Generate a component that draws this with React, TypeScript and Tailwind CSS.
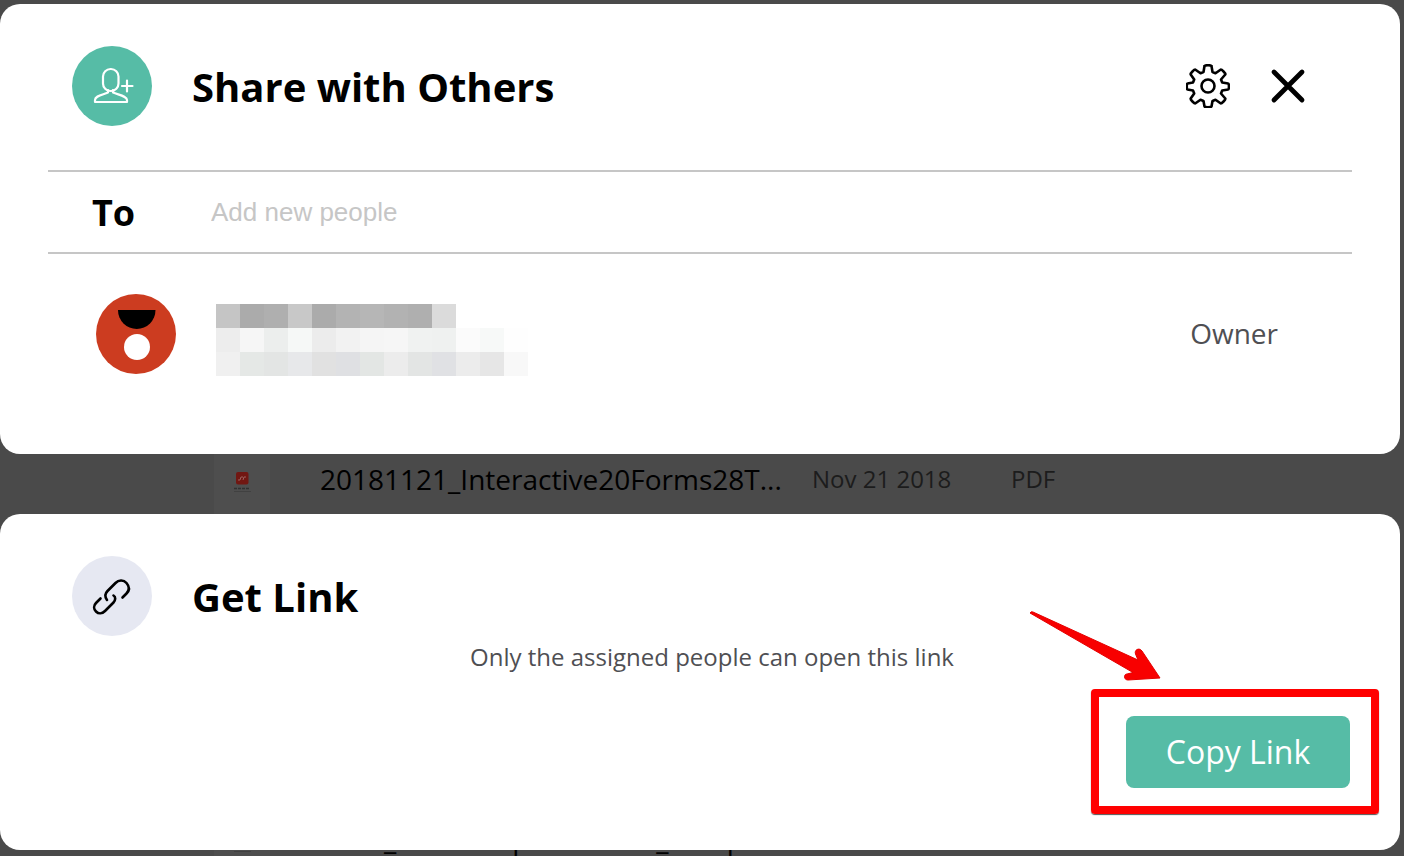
import React from "react";

const MOSAIC = [
  ["bg-[#c5c5c5]", "bg-[#ababab]", "bg-[#afafaf]", "bg-[#c8c8c8]", "bg-[#ababab]", "bg-[#b3b3b3]", "bg-[#b6b6b6]", "bg-[#b2b2b2]", "bg-[#afafaf]", "bg-[#dbdbdb]", "bg-white", "bg-white", "bg-white"],
  ["bg-[#ededed]", "bg-[#f6f6f6]", "bg-[#eceeed]", "bg-[#f6f8f7]", "bg-[#ececec]", "bg-[#f2f2f2]", "bg-[#f5f5f5]", "bg-[#f6f6f6]", "bg-[#f0f2f1]", "bg-[#eff1f0]", "bg-[#fbfbfb]", "bg-[#f7f9f8]", "bg-[#fefefe]"],
  ["bg-[#f0f0f0]", "bg-[#e5e8e6]", "bg-[#e3e5e4]", "bg-[#e7e8ea]", "bg-[#e1e1e1]", "bg-[#dfe0e3]", "bg-[#e3e6e4]", "bg-[#ececec]", "bg-[#e3e5e4]", "bg-[#e0e1e4]", "bg-[#ececec]", "bg-[#e6e6e6]", "bg-[#f8f8f8]"],
];

function FileThumb() {
  return (
    <svg className="h-15 w-14 shrink-0 self-start bg-[#4e4e4e]" viewBox="0 0 56 60" aria-hidden="true">
      <rect x="22" y="18" width="12.500" height="12.500" rx="2" fill="#711712" />
      <path d="M24 26h2l1-3h2M29 26l1-3h2" stroke="#9b625e" fill="none" />
      <path d="M20 34.500h16" stroke="#303030" strokeWidth="1.500" strokeDasharray="3 1" />
      <path d="M20 37.500h17" stroke="#414141" />
    </svg>
  );
}

function FileRow({ name, date, kind }: { name: string; date: string; kind: string }) {
  return (
    <div className="flex h-15 items-center pl-[214px] text-2xl text-[#1c1c1c]">
      <FileThumb />
      <span className="ml-[50px] w-[492px] shrink-0 whitespace-nowrap pb-2.5 text-[28px] leading-9 text-black">{name}</span>
      <span className="w-[199px] shrink-0 pb-2.5 leading-9">{date}</span>
      <span className="pb-2.5 leading-9">{kind}</span>
    </div>
  );
}

export default function App() {
  return (
    <div className="min-h-screen overflow-hidden bg-[#4a4a4a] pt-1 font-['Open_Sans',sans-serif] text-black">
      <section className="mr-1 rounded-[20px] bg-white px-12 pb-[78px]">
        <header className="flex h-[166px] items-center pl-6 pr-[46px] pb-0.5">
          <svg className="size-20 shrink-0" viewBox="0 0 80 80" aria-hidden="true">
            <circle cx="40" cy="40" r="40" fill="#56bca6" />
            <g fill="none" stroke="white" strokeWidth="2.200" strokeLinecap="round" strokeLinejoin="round">
              <rect x="31" y="23" width="15.500" height="22" rx="7.500" />
              <path d="M36 44v2.500C30 49 23 50 23 54v2h32v-2c0-4-8-5-14-7.500V44M55 34.500v11M50 40h10.500" />
            </g>
          </svg>
          <h1 className="ml-10 flex-1 pt-0.5 text-[40px] font-bold leading-12">Share with Others</h1>
          <button aria-label="Settings" className="size-11">
            <svg viewBox="0 0 44 44" fill="none" stroke="black" strokeWidth="2.600" strokeLinejoin="round">
              <path d="M18.500 2c0-1 7-1 7 0l1 6 3 1.200 5-3.500c1-.7 5.500 3.800 4.800 4.800L35 15.500l1.200 3 6 1c1 0 1 6 0 6l-6 1-1.200 3 4.300 5c.7 1-3.800 5.500-4.800 4.800l-5-3.500-3 1.200-1 5.500c0 1-7 1-7 0l-1-5.500-3-1.200-5 3.500c-1 .7-5.500-3.800-4.800-4.800l3.500-5-1.200-3-5.500-1c-1 0-1-6 0-6l5.500-1 1.200-3-3.500-5c-.7-1 3.800-5.500 4.800-4.800l5 3.500 3-1.200z" />
              <circle cx="22" cy="22" r="6.500" />
            </svg>
          </button>
          <button aria-label="Close" className="ml-10 size-9">
            <svg viewBox="0 0 36 36" stroke="black" strokeWidth="4.800" strokeLinecap="round">
              <path d="M4 4l28 28M32 4L4 32" />
            </svg>
          </button>
        </header>
        <div className="flex h-[84px] items-center border-y-2 border-[#c6c6c6] pl-11">
          <label htmlFor="people" className="w-[119px] pt-0.5 text-4xl font-bold">To</label>
          <input id="people" type="text" placeholder="Add new people" className="min-w-0 flex-1 font-['Liberation_Sans',sans-serif] text-[26px] leading-8 outline-none placeholder:text-[#c6c6c6] placeholder:opacity-100" />
        </div>
        <div className="flex items-center pl-12 pr-[74px] pt-[38px]">
          <svg className="size-20 shrink-0" viewBox="0 0 80 80" aria-hidden="true">
            <circle cx="40" cy="40" r="40" fill="#cc3c20" />
            <path d="M22 16h37.500a18.700 19 0 0 1-37.500 0z" />
            <circle cx="41" cy="53" r="13" fill="white" />
          </svg>
          <div className="ml-10 mt-3 grid grid-cols-[repeat(13,24px)] auto-rows-[24px]" aria-hidden="true">
            {MOSAIC.flat().map((c, i) => <span key={i} className={c} />)}
          </div>
          <span className="ml-auto pb-0.5 text-[28px] leading-10 text-[#4f4f53]">Owner</span>
        </div>
      </section>

      <FileRow name="20181121_Interactive20Forms28T..." date="Nov 21 2018" kind="PDF" />

      <section className="relative mr-1 flex flex-col rounded-[20px] bg-white pb-9 pt-[42px]">
        <header className="flex items-center pl-18">
          <svg className="size-20 shrink-0" viewBox="0 0 80 80" aria-hidden="true">
            <circle cx="40" cy="40" r="40" fill="#e6e8f2" />
            <g fill="none" stroke="black" strokeWidth="2.600" strokeLinecap="round">
              <path d="M35 44c-2.500-3.500-2-6.500.5-9l8-8c3-3 8-3.500 11 0s3 7.500 0 10.500l-4 4" />
              <path d="M41.500 39.500c2.500 1.500 2 5 0 7L33 55c-3 3-6.500 3-9 .5-2.500-2.500-2.500-6 0-8.500l4.500-4.500" />
            </g>
          </svg>
          <h2 className="ml-10 pt-0.5 text-[40px] font-bold leading-12">Get Link</h2>
        </header>
        <p className="pl-6 text-center text-2xl leading-[42px] text-[#4f4f53]">Only the assigned people can open this link</p>
        <div className="relative mr-[21px] mt-[11px] self-end rounded-sm border-8 border-[#ff0000] pt-[19px] pr-[21px] pb-[18px] pl-[27px] shadow-[0_1px_1px_#555]">
          <button className="block h-18 w-56 rounded-lg bg-[#56bca6] text-[32px] text-white">Copy Link</button>
          <svg className="absolute -left-[70px] -top-[86px] h-[72px] w-[134px]" viewBox="0 0 134 72" aria-hidden="true">
            <path d="M1 2Q2 0 4 1L109 49L106.500 43C105 39 110 36 113 40L131 67L99 69C94.500 69 94.500 63 98 63L104 61.500Z" fill="#f80000" stroke="#e50000" strokeWidth="1" strokeLinejoin="round" />
          </svg>
        </div>
      </section>

      <div className="-mt-9 h-[42px] overflow-hidden">
        <FileRow name="2018_Studentsproduction_Setup..." date="Nov 21 2018" kind="PDF" />
      </div>
    </div>
  );
}
